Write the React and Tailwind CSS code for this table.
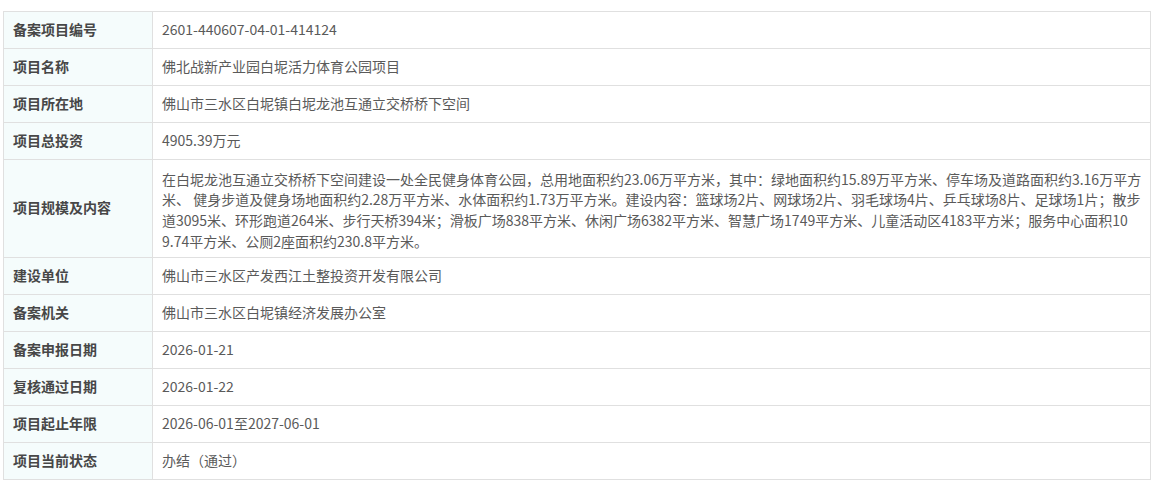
import React from "react";

const rows = [
  ["备案项目编号", "2601-440607-04-01-414124"],
  ["项目名称", "佛北战新产业园白坭活力体育公园项目"],
  ["项目所在地", "佛山市三水区白坭镇白坭龙池互通立交桥桥下空间"],
  ["项目总投资", "4905.39万元"],
  [
    "项目规模及内容",
    [
      "在白坭龙池互通立交桥桥下空间建设一处全民健身体育公园，总用地面积约23.06万平方米，其中：绿地面积约15.89万平方米、停车场及道路面积约3.16万平方",
      "米、 健身步道及健身场地面积约2.28万平方米、水体面积约1.73万平方米。建设内容：篮球场2片、网球场2片、羽毛球场4片、乒乓球场8片、足球场1片；散步",
      "道3095米、环形跑道264米、步行天桥394米；滑板广场838平方米、休闲广场6382平方米、智慧广场1749平方米、儿童活动区4183平方米；服务中心面积10",
      "9.74平方米、公厕2座面积约230.8平方米。",
    ],
  ],
  ["建设单位", "佛山市三水区产发西江土整投资开发有限公司"],
  ["备案机关", "佛山市三水区白坭镇经济发展办公室"],
  ["备案申报日期", "2026-01-21"],
  ["复核通过日期", "2026-01-22"],
  ["项目起止年限", "2026-06-01至2027-06-01"],
  ["项目当前状态", "办结（通过）"],
];

export default function App() {
  return (
    <div
      className="w-[1161px] h-[487px] bg-white pt-[11px] pl-[3px]"
      style={{ fontFamily: '"Microsoft YaHei", "Noto Sans CJK SC", "Noto Sans", sans-serif' }}
    >
      <div className="w-[1148px] border-l border-t border-[#e0e0e0] text-[14px]">
        {rows.map(([label, value], i) => {
          const multi = Array.isArray(value);
          return (
            <div
              key={i}
              className={`flex border-b border-[#e0e0e0] ${multi ? "h-[98px]" : "h-[37px]"}`}
            >
              <div className="w-[149px] shrink-0 bg-[#f5fcfc] border-r border-[#e0e0e0] pl-[9px] pb-[2px] flex items-center font-bold text-[#474747] leading-[21px]">
                {label}
              </div>
              <div
                className={`flex-1 border-r border-[#e0e0e0] pl-[9px] flex items-center text-[#5a5a5a] leading-[21px] ${multi ? "" : "pb-[2px]"}`}
              >
                {multi ? (
                  <div className="pt-[3px]">
                    {value.map((l, j) => (
                      <div key={j} className="whitespace-nowrap leading-[20.7px]">
                        {l}
                      </div>
                    ))}
                  </div>
                ) : (
                  value
                )}
              </div>
            </div>
          );
        })}
      </div>
    </div>
  );
}
